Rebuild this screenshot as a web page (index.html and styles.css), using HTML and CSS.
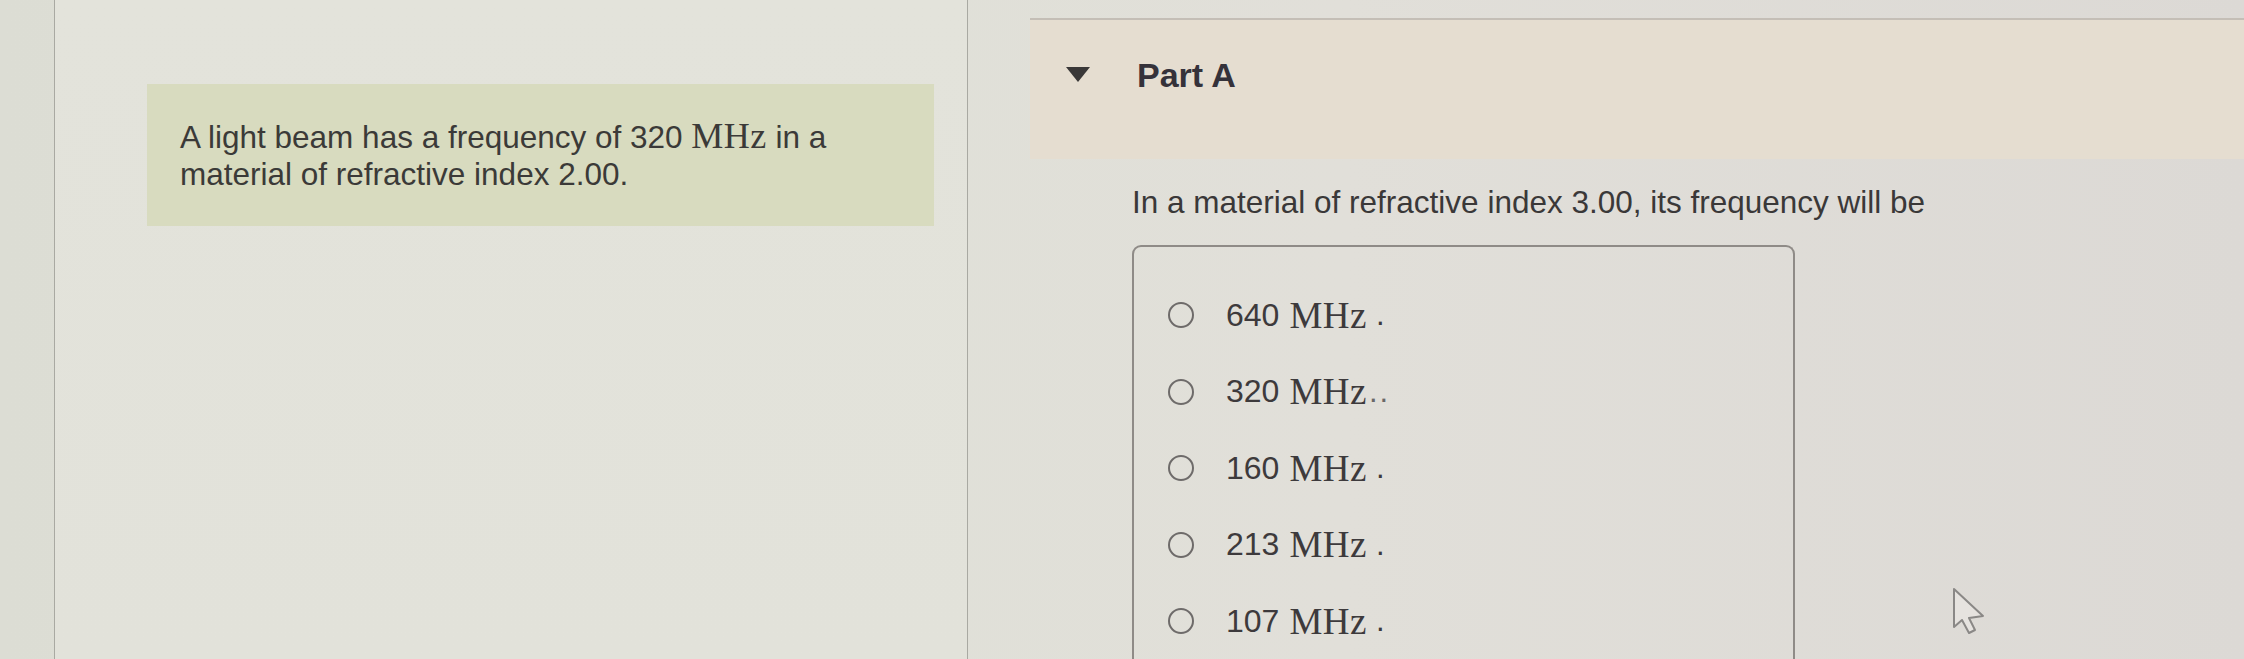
FILE: index.html
```html
<!DOCTYPE html>
<html lang="en">
<head>
<meta charset="utf-8">
<title>Part A</title>
<link rel="stylesheet" href="styles.css">
</head>
<body>
<div class="page">
  <div class="gutter"></div>
  <section class="intro">
    <div class="intro-box">
      <p>A light beam has a frequency of 320 <span class="math">MHz</span> in a material of refractive index 2.00.</p>
    </div>
  </section>
  <section class="part">
    <header class="part-head">
      <span class="caret"></span>
      <h2>Part A</h2>
    </header>
    <p class="question">In a material of refractive index 3.00, its frequency will be</p>
    <div class="choices">
      <label class="choice"><span class="radio"></span><span class="num">640</span><span class="math">MHz</span><span class="dot">.</span></label>
      <label class="choice"><span class="radio"></span><span class="num">320</span><span class="math">MHz</span><span class="dot dot-tight">..</span></label>
      <label class="choice"><span class="radio"></span><span class="num">160</span><span class="math">MHz</span><span class="dot">.</span></label>
      <label class="choice"><span class="radio"></span><span class="num">213</span><span class="math">MHz</span><span class="dot">.</span></label>
      <label class="choice"><span class="radio"></span><span class="num">107</span><span class="math">MHz</span><span class="dot">.</span></label>
    </div>
  </section>
</div>
<svg class="cursor" width="36" height="50" viewBox="0 0 36 50" aria-hidden="true">
  <path d="M2 2 L2 40 L10 33 L17 46 L23 43 L17 31 L31 29 Z" fill="#e6e3df" stroke="#8a8886" stroke-width="2" stroke-linejoin="round"/>
</svg>
</body>
</html>
```

FILE: styles.css
```css
html, body {
  margin: 0;
  padding: 0;
  height: 659px;
  overflow: hidden;
}

body {
  background: linear-gradient(90deg, #dcddd4 0%, #e0e0d8 40%, #e1dfd9 60%, #dcd9d5 100%);
  font-family: "Liberation Sans", Arial, Helvetica, sans-serif;
  color: #3a3838;
  position: relative;
}

.page {
  display: flex;
  height: 659px;
}

.gutter {
  width: 54px;
  flex: none;
}

.intro {
  width: 820px;
  flex: none;
  border-left: 1px solid #a9a9a2;
  border-right: 1px solid #a9a9a2;
  background: linear-gradient(180deg, #e3e3db 0%, #e2e2da 100%);
  padding: 84px 0 0 92px;
}

.intro-box {
  width: 787px;
  height: 142px;
  box-sizing: border-box;
  background: #d8dbbf;
  padding: 35px 20px 0 33px;
}

.intro-box p {
  margin: 0;
  font-size: 31.5px;
  line-height: 37px;
  color: #3b3a38;
}

.math {
  font-family: "Liberation Serif", "Times New Roman", serif;
  font-size: 36px;
  line-height: 0;
  letter-spacing: 0.5px;
}

.part {
  flex: 1;
  margin-left: 62px;
  padding-top: 18px;
}

.part-head {
  display: flex;
  align-items: center;
  height: 141px;
  box-sizing: border-box;
  border-top: 2px solid #c4beb6;
  background: #e5ddd0;
  padding: 0 0 0 36px;
}

.caret {
  width: 0;
  height: 0;
  border-left: 12px solid transparent;
  border-right: 12px solid transparent;
  border-top: 15px solid #3a3838;
  margin-top: -31px;
}

.part-head h2 {
  margin: -30px 0 0 47px;
  font-size: 34px;
  line-height: 40px;
  font-weight: bold;
  color: #35323a;
}

.question {
  margin: 25px 0 0 102px;
  font-size: 31.5px;
  line-height: 37px;
  color: #3a3838;
}

.choices {
  margin: 24px 0 0 102px;
  width: 663px;
  height: 440px;
  box-sizing: border-box;
  border: 2px solid #8f8b87;
  border-bottom: none;
  border-radius: 9px 9px 0 0;
  padding: 30px 0 0 34px;
  display: flex;
  flex-direction: column;
}

.choice {
  display: flex;
  align-items: center;
  height: 76.5px;
  color: #3d3a3c;
}

.radio {
  width: 22px;
  height: 22px;
  border: 2px solid #6e6b6a;
  border-radius: 50%;
  flex: none;
  margin-right: 32px;
}

.num {
  font-size: 32px;
  margin-right: 10px;
}

.choice .math {
  font-size: 37px;
  line-height: 1;
  letter-spacing: 0.5px;
}

.dot {
  font-size: 31px;
  margin-left: 9px;
}

.dot-tight {
  margin-left: 2px;
  letter-spacing: 2px;
  color: #6a6868;
}

.cursor {
  position: absolute;
  left: 1952px;
  top: 587px;
}
```
